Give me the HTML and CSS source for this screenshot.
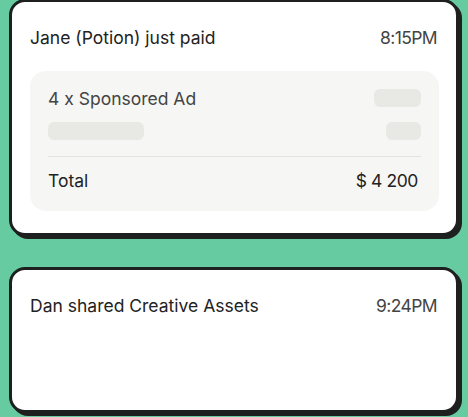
FILE: index.html
```html
<!DOCTYPE html>
<html>
<head>
<meta charset="utf-8">
<link rel="stylesheet" href="styles.css">
</head>
<body>
<div class="feed">
  <div class="card">
    <div class="card-head">
      <span class="title">Jane (Potion) just paid</span>
      <span class="time">8:15PM</span>
    </div>
    <div class="panel">
      <div class="row">
        <span class="item">4 x Sponsored Ad</span>
        <span class="skel skel-a"></span>
      </div>
      <div class="row">
        <span class="skel skel-b"></span>
        <span class="skel skel-c"></span>
      </div>
      <div class="divider"></div>
      <div class="row total">
        <span>Total</span>
        <span class="amount">$ 4 200</span>
      </div>
    </div>
  </div>
  <div class="card card-tall">
    <div class="card-head">
      <span class="title">Dan shared Creative Assets</span>
      <span class="time">9:24PM</span>
    </div>
  </div>
</div>
</body>
</html>
```

FILE: styles.css
```css
html, body {
  margin: 0;
  padding: 0;
  background: #66cba0;
  height: 100%;
  overflow: hidden;
}
body {
  font-family: Inter, "Noto Sans", sans-serif;
  color: #222;
}
.feed {
  display: flex;
  flex-direction: column;
  gap: 31px;
  padding: 0 9px 0 9px;
  margin-top: -1px;
}
.card {
  width: 450px;
  box-sizing: border-box;
  background: #fff;
  border: 3px solid #1e1f1f;
  border-radius: 16px;
  box-shadow: 3px 3px 0 #1e1f1f;
  padding: 23px 17px 22px 18px;
}
.card-tall {
  height: 146px;
}
.card-head {
  display: flex;
  justify-content: space-between;
  align-items: center;
  height: 24px;
  font-size: 17.5px;
}
.title {
  color: #222;
}
.time {
  color: #444;
  letter-spacing: -0.6px;
  padding-right: 2px;
}
.panel {
  margin-top: 22px;
  background: #f6f6f4;
  border-radius: 16px;
  padding: 18px 18px 19px 18px;
  display: flex;
  flex-direction: column;
}
.row {
  display: flex;
  justify-content: space-between;
  align-items: center;
  height: 18px;
  font-size: 17.5px;
  color: #444;
}
.row + .row {
  margin-top: 15px;
}
.skel {
  display: block;
  height: 18px;
  background: #e8e8e5;
  border-radius: 6px;
}
.skel-a { width: 47px; }
.skel-b { width: 96px; }
.skel-c { width: 35px; }
.divider {
  height: 1px;
  background: #e3e3e0;
  margin: 16px 0 11px;
}
.row.total {
  height: 24px;
  margin-top: 0;
  color: #222;
}
.amount {
  letter-spacing: -0.4px;
  padding-right: 3px;
}
```
